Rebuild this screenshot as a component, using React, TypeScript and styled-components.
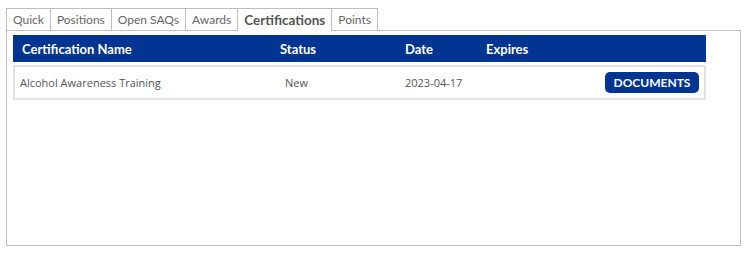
import * as React from 'react'
import styled, { createGlobalStyle } from 'styled-components'

const GlobalStyle = createGlobalStyle`
  body {
    margin: 0;
    background: #fff;
    font-family: Lato, "Open Sans", sans-serif;
  }
`

const tabs = ['Quick', 'Positions', 'Open SAQs', 'Awards', 'Certifications', 'Points']

const certs = [{ name: 'Alcohol Awareness Training', status: 'New', date: '2023-04-17', expires: '' }]

export default function App() {
  return (
    <Page>
      <GlobalStyle />
      <TabStrip>
        {tabs.map(t => (
          <Tab key={t} active={t === 'Certifications'}>
            {t}
          </Tab>
        ))}
      </TabStrip>
      <Panel>
        <HeaderBar>
          <HeadCell>Certification Name</HeadCell>
          <HeadCell>Status</HeadCell>
          <HeadCell>Date</HeadCell>
          <HeadCell>Expires</HeadCell>
          <HeadCell />
        </HeaderBar>
        {certs.map(c => (
          <CertRow key={c.name}>
            <Cell>{c.name}</Cell>
            <Cell>{c.status}</Cell>
            <Cell>{c.date}</Cell>
            <Cell>{c.expires}</Cell>
            <ActionCell>
              <DocButton>DOCUMENTS</DocButton>
            </ActionCell>
          </CertRow>
        ))}
      </Panel>
    </Page>
  )
}

const Page = styled.div`
  padding: 8px 0 0 6px;
  width: 735px;
`

const TabStrip = styled.div`
  display: flex;
  height: 22px;
`

const Tab = styled.div<{ active?: boolean }>`
  box-sizing: border-box;
  height: ${p => (p.active ? '23px' : '22px')};
  padding: 0 6px;
  margin-right: -1px;
  border: 1px solid #bdbdbd;
  border-bottom: none;
  background: #fff;
  position: relative;
  z-index: ${p => (p.active ? 1 : 0)};
  display: flex;
  align-items: center;
  font-size: ${p => (p.active ? '13.5px' : '12px')};
  font-weight: ${p => (p.active ? 700 : 400)};
  color: ${p => (p.active ? '#555' : '#666')};
`

const Panel = styled.div`
  box-sizing: border-box;
  height: 216px;
  border: 1px solid #bdbdbd;
  padding: 4px 0 0 6px;
`

const columns = '258px 125px 81px 1fr 100px'

const HeaderBar = styled.div`
  display: grid;
  grid-template-columns: ${columns};
  align-items: center;
  width: 693px;
  height: 27px;
  background: #013591;
  color: #fff;
  font-size: 13px;
  font-weight: 700;
`

const HeadCell = styled.div`
  padding-left: 9px;
`

const CertRow = styled.div`
  box-sizing: border-box;
  display: grid;
  grid-template-columns: ${columns};
  align-items: center;
  width: 693px;
  height: 35px;
  margin-top: 3px;
  border: 2px solid #e2e2e2;
  font-family: "Open Sans", sans-serif;
  font-size: 11px;
  color: #555;
`

const Cell = styled.div`
  padding-left: 5px;

  &:nth-child(2) {
    padding-left: 12px;
  }

  &:nth-child(3) {
    padding-left: 7px;
  }
`

const ActionCell = styled.div`
  display: flex;
  justify-content: flex-end;
  padding-right: 5px;
`

const DocButton = styled.button`
  box-sizing: border-box;
  width: 94px;
  height: 21px;
  border: none;
  border-radius: 5px;
  background: #013591;
  color: #fff;
  font-family: Lato, "Open Sans", sans-serif;
  font-size: 12px;
  font-weight: 700;
  padding: 0;
`
